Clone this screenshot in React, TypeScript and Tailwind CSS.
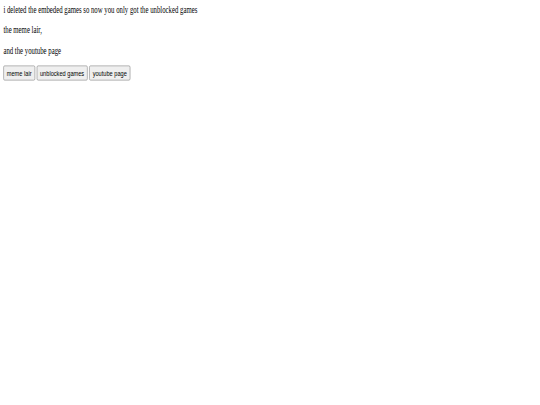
export default function App() {
    const links = ['meme lair', 'unblocked games', 'youtube page']

    return (
        <div className="w-[540px] h-[405px] overflow-hidden bg-white">
            {/* the original page, shrunk down like the screenshot */}
            <div className="w-[1277px] origin-top-left [transform:scale(0.423,0.596)] p-2 font-['Liberation_Serif',serif] text-[16px] leading-[normal] text-black">
                i deleted the embeded games so now you only got the unblocked games
                <p className="my-4">the meme lair,</p>
                <p className="my-4">and the youtube page</p>
                <div className="flex gap-[4px]">
                    {links.map((name) => (
                        <button
                            key={name}
                            className="px-[7px] py-[4px] bg-[#efefef] border border-[#767676] rounded-[3px] font-['Liberation_Sans',sans-serif] text-[13.33px] leading-[normal] text-black"
                        >
                            {name}
                        </button>
                    ))}
                </div>
            </div>
        </div>
    )
}
